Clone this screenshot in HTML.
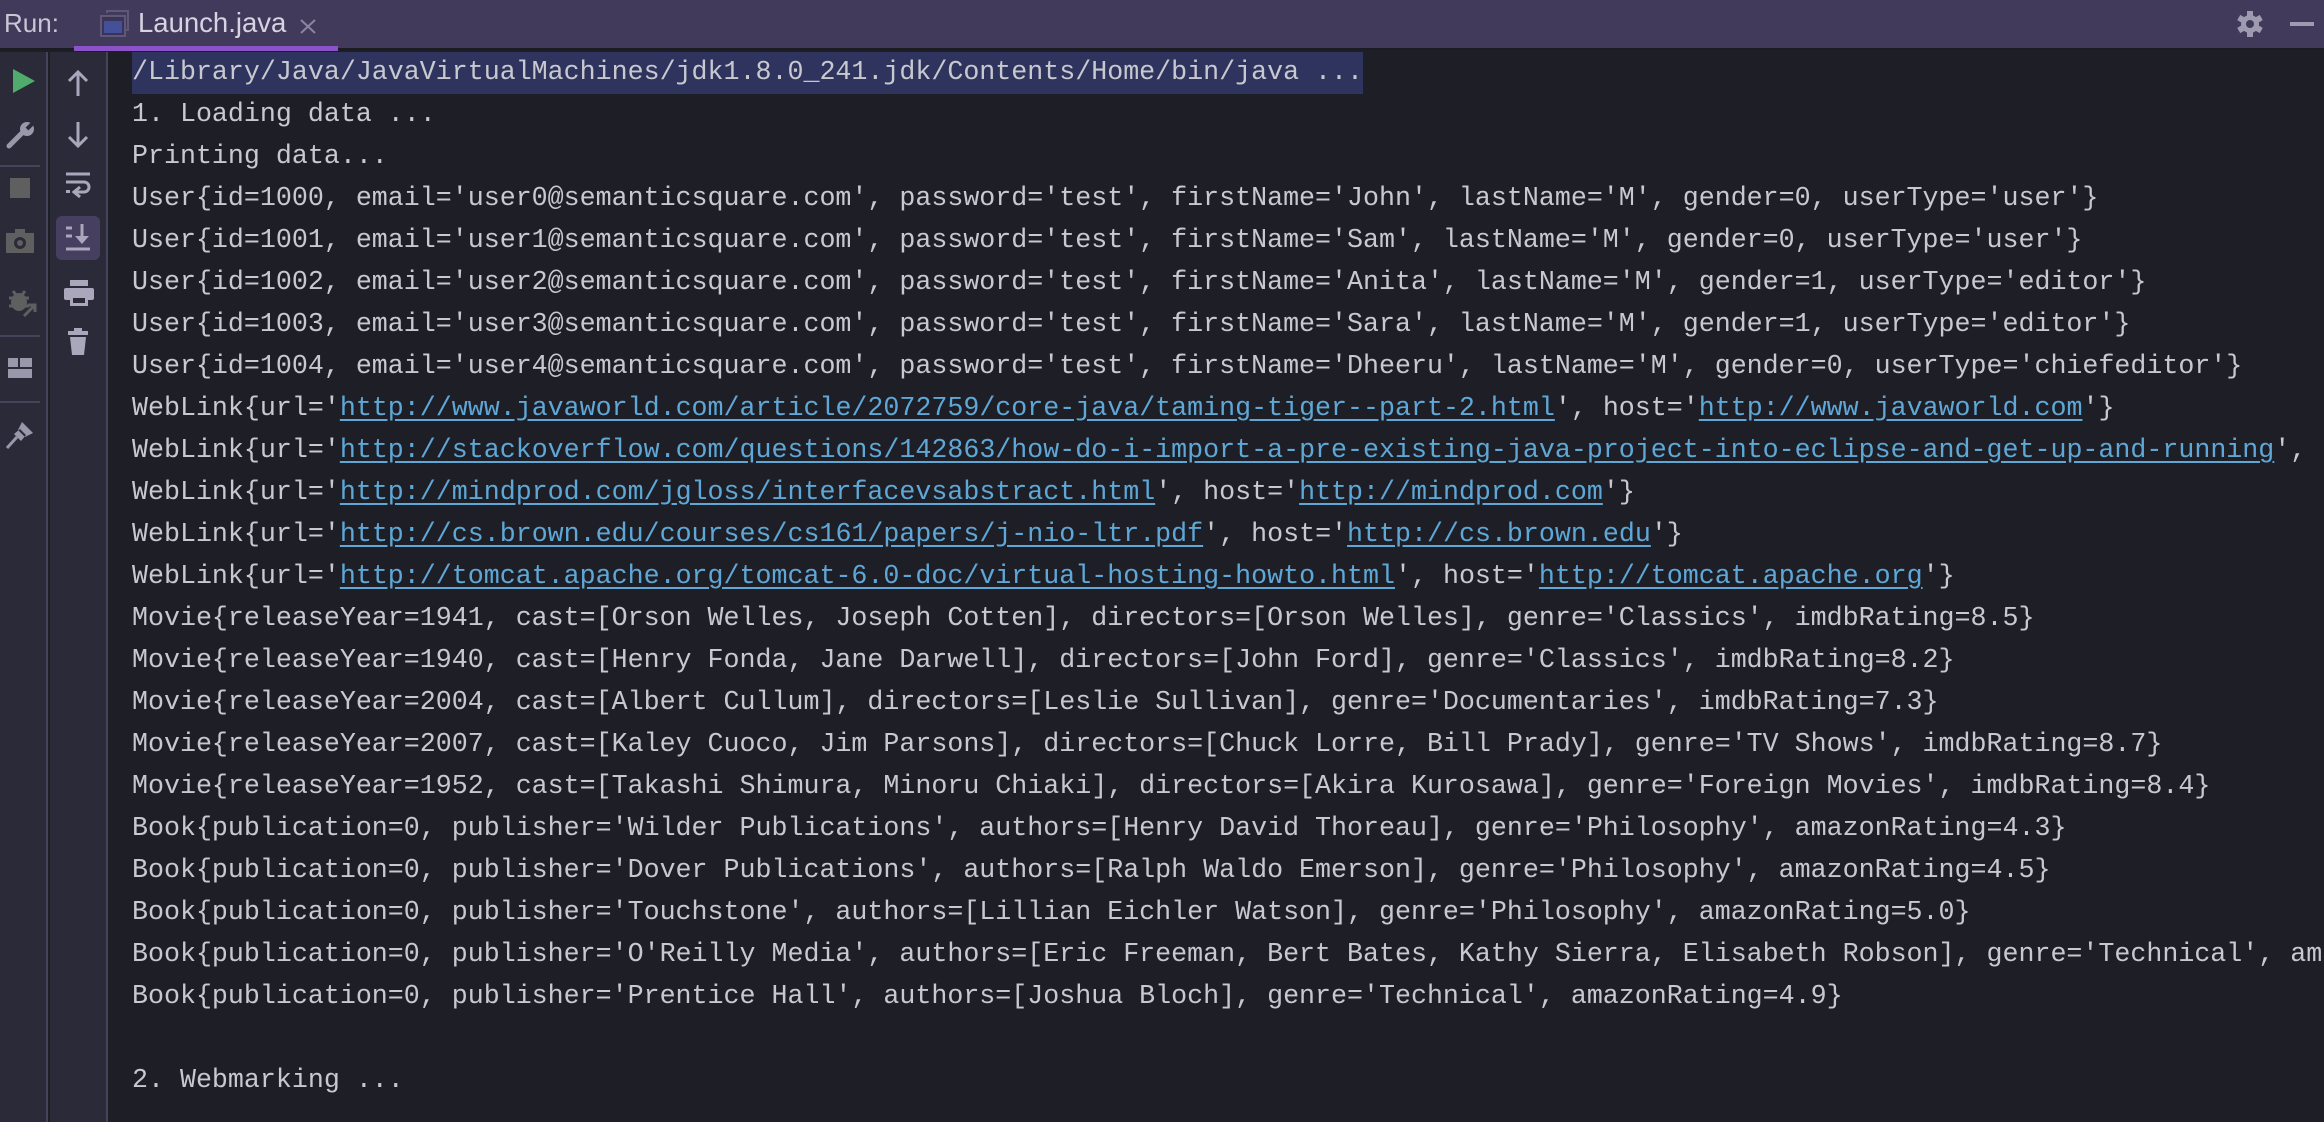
<!DOCTYPE html>
<html><head><meta charset="utf-8"><style>
html,body{margin:0;padding:0;width:2324px;height:1122px;overflow:hidden;background:#1e1f26;}
*{box-sizing:border-box}
.top{position:absolute;left:0;top:0;width:2324px;height:50px;background:#423a5a;border-bottom:2px solid #1b1b22;}
.run{position:absolute;left:4px;top:8px;font:26px "Liberation Sans",sans-serif;color:#c9c6d6;}
.tabt{position:absolute;left:138px;top:7px;font:27.5px "Liberation Sans",sans-serif;color:#d6d3e2;}
.ul{position:absolute;left:74px;top:46px;width:264px;height:5px;background:#8c52c8;}
.col1{position:absolute;left:0;top:52px;width:48px;height:1070px;background:#2b2a39;border-right:2px solid #45435a;}
.col2{position:absolute;left:50px;top:52px;width:58px;height:1070px;background:#2b2a39;border-right:2px solid #45435a;}
.sep{position:absolute;left:0;width:40px;height:2px;background:#45435a;}
.code{position:absolute;left:132px;top:52px;right:0;font:26.65px/42px "Liberation Mono",monospace;color:#c8c8cf;white-space:pre;overflow:hidden;}
.sel{background:#2f345e;margin-left:-2px;padding-left:2px;display:inline-block;height:42px;}
a{color:#5ea7d6;text-decoration:underline;text-underline-offset:4px}
svg{position:absolute}
</style></head><body>
<div class="top">
<div class="run">Run:</div>
<svg style="left:100px;top:10px" width="30" height="28" viewBox="0 0 30 28"><path d="M7 3V1H28V20H25" fill="none" stroke="#5f5878" stroke-width="2"/><rect x="1" y="6" width="24" height="20" fill="#3a3556" stroke="#5f5878" stroke-width="2"/><rect x="4" y="11" width="18" height="12" fill="#44509a"/></svg>
<div class="tabt">Launch.java</div>
<svg style="left:300px;top:19px" width="16" height="15" viewBox="0 0 16 15"><path d="M1 1L15 14M15 1L1 14" stroke="#8a86a0" stroke-width="2"/></svg>
<div class="ul"></div>
<svg style="left:2236px;top:10px" width="28" height="28" viewBox="0 0 28 28"><g fill="#9e9bb0"><circle cx="14" cy="14" r="9"/><rect x="11" y="1" width="6" height="26"/><rect x="11" y="1" width="6" height="26" transform="rotate(60 14 14)"/><rect x="11" y="1" width="6" height="26" transform="rotate(120 14 14)"/></g><circle cx="14" cy="14" r="4" fill="#423a5a"/></svg>
<div style="position:absolute;left:2290px;top:22px;width:24px;height:4px;background:#9e9bb0"></div>
</div>
<div class="col1">
<svg style="left:11px;top:16px" width="26" height="26" viewBox="0 0 26 26"><path d="M2 1L24 13L2 25Z" fill="#4fac6c"/></svg>
<svg style="left:6px;top:68px" width="30" height="30" viewBox="0 0 30 30"><path d="M3 26L17 12" stroke="#9a97aa" stroke-width="5" stroke-linecap="round"/><circle cx="21" cy="9" r="7" fill="#9a97aa"/><path d="M21 9L27 3" stroke="#2b2a39" stroke-width="4"/></svg>
<div class="sep" style="top:113px"></div>
<div style="position:absolute;left:10px;top:126px;width:20px;height:20px;background:#5f5f5f"></div>
<svg style="left:5px;top:176px" width="30" height="26" viewBox="0 0 30 26"><rect x="1" y="5" width="28" height="20" fill="#5f5f5f"/><rect x="10" y="1" width="10" height="6" fill="#5f5f5f"/><circle cx="15" cy="15" r="6" fill="#2b2a39"/><circle cx="15" cy="15" r="3" fill="#5f5f5f"/></svg>
<svg style="left:7px;top:236px" width="30" height="30" viewBox="0 0 30 30"><ellipse cx="12" cy="14" rx="8" ry="9" fill="#5f5f5f"/><path d="M2 10h20M2 18h20M6 3l3 4M18 3l-3 4" stroke="#5f5f5f" stroke-width="3"/><path d="M17 28L28 17M21 17h7v7" stroke="#5f5f5f" stroke-width="3" fill="none"/></svg>
<div class="sep" style="top:283px"></div>
<svg style="left:8px;top:306px" width="24" height="20" viewBox="0 0 24 20"><rect x="0" y="0" width="10" height="9" fill="#9a97aa"/><rect x="12" y="0" width="12" height="9" fill="#9a97aa"/><rect x="0" y="11" width="24" height="9" fill="#9a97aa"/></svg>
<div class="sep" style="top:349px"></div>
<svg style="left:5px;top:368px" width="30" height="30" viewBox="0 0 30 30"><path d="M2 28L12 17" stroke="#9a97aa" stroke-width="3"/><path d="M17 2L28 13L20 17L13 10Z M9 14L16 21L21 15L15 9Z" fill="#9a97aa"/></svg>
</div>
<div class="col2">
<svg style="left:16px;top:18px" width="24" height="26" viewBox="0 0 24 26"><path d="M12 26V3M3 11L12 2L21 11" stroke="#aaa6bb" stroke-width="3" fill="none"/></svg>
<svg style="left:16px;top:70px" width="24" height="26" viewBox="0 0 24 26"><path d="M12 0V23M3 15L12 24L21 15" stroke="#aaa6bb" stroke-width="3" fill="none"/></svg>
<div style="position:absolute;left:6px;top:164px;width:44px;height:44px;background:#463f5f;border-radius:6px"></div>
<svg style="left:16px;top:120px" width="26" height="30" viewBox="0 0 26 30"><path d="M0 2H24M0 10H18a5 5 0 0 1 0 10H10" stroke="#aaa6bb" stroke-width="3" fill="none"/><path d="M14 15L8 20L14 25" stroke="#aaa6bb" stroke-width="3" fill="none"/><rect x="0" y="18" width="4" height="3" fill="#aaa6bb"/></svg>
<svg style="left:16px;top:172px" width="26" height="28" viewBox="0 0 26 28"><path d="M0 4H6M0 12H6M0 25H24" stroke="#aaa6bb" stroke-width="3"/><path d="M16 0V15" stroke="#aaa6bb" stroke-width="3"/><path d="M9 12L16 20L23 12Z" fill="#aaa6bb"/></svg>
<svg style="left:14px;top:228px" width="30" height="28" viewBox="0 0 30 28"><rect x="6" y="0" width="18" height="6" fill="#aaa6bb"/><rect x="0" y="8" width="30" height="12" rx="2" fill="#aaa6bb"/><rect x="6" y="16" width="18" height="10" fill="#aaa6bb"/><rect x="9" y="18" width="12" height="5" fill="#2b2a39"/></svg>
<svg style="left:18px;top:276px" width="22" height="28" viewBox="0 0 22 28"><rect x="0" y="3" width="20" height="4" fill="#aaa6bb"/><rect x="6" y="0" width="8" height="3" fill="#aaa6bb"/><path d="M2 9H18L16 27H4Z" fill="#aaa6bb"/></svg>
</div>
<div class="code"><span class="sel">/Library/Java/JavaVirtualMachines/jdk1.8.0_241.jdk/Contents/Home/bin/java ...</span>
1. Loading data ...
Printing data...
User{id=1000, email='user0@semanticsquare.com', password='test', firstName='John', lastName='M', gender=0, userType='user'}
User{id=1001, email='user1@semanticsquare.com', password='test', firstName='Sam', lastName='M', gender=0, userType='user'}
User{id=1002, email='user2@semanticsquare.com', password='test', firstName='Anita', lastName='M', gender=1, userType='editor'}
User{id=1003, email='user3@semanticsquare.com', password='test', firstName='Sara', lastName='M', gender=1, userType='editor'}
User{id=1004, email='user4@semanticsquare.com', password='test', firstName='Dheeru', lastName='M', gender=0, userType='chiefeditor'}
WebLink{url='<a>http://www.javaworld.com/article/2072759/core-java/taming-tiger--part-2.html</a>', host='<a>http://www.javaworld.com</a>'}
WebLink{url='<a>http://stackoverflow.com/questions/142863/how-do-i-import-a-pre-existing-java-project-into-eclipse-and-get-up-and-running</a>', host='<a>http://stackoverflow.com</a>'}
WebLink{url='<a>http://mindprod.com/jgloss/interfacevsabstract.html</a>', host='<a>http://mindprod.com</a>'}
WebLink{url='<a>http://cs.brown.edu/courses/cs161/papers/j-nio-ltr.pdf</a>', host='<a>http://cs.brown.edu</a>'}
WebLink{url='<a>http://tomcat.apache.org/tomcat-6.0-doc/virtual-hosting-howto.html</a>', host='<a>http://tomcat.apache.org</a>'}
Movie{releaseYear=1941, cast=[Orson Welles, Joseph Cotten], directors=[Orson Welles], genre='Classics', imdbRating=8.5}
Movie{releaseYear=1940, cast=[Henry Fonda, Jane Darwell], directors=[John Ford], genre='Classics', imdbRating=8.2}
Movie{releaseYear=2004, cast=[Albert Cullum], directors=[Leslie Sullivan], genre='Documentaries', imdbRating=7.3}
Movie{releaseYear=2007, cast=[Kaley Cuoco, Jim Parsons], directors=[Chuck Lorre, Bill Prady], genre='TV Shows', imdbRating=8.7}
Movie{releaseYear=1952, cast=[Takashi Shimura, Minoru Chiaki], directors=[Akira Kurosawa], genre='Foreign Movies', imdbRating=8.4}
Book{publication=0, publisher='Wilder Publications', authors=[Henry David Thoreau], genre='Philosophy', amazonRating=4.3}
Book{publication=0, publisher='Dover Publications', authors=[Ralph Waldo Emerson], genre='Philosophy', amazonRating=4.5}
Book{publication=0, publisher='Touchstone', authors=[Lillian Eichler Watson], genre='Philosophy', amazonRating=5.0}
Book{publication=0, publisher='O'Reilly Media', authors=[Eric Freeman, Bert Bates, Kathy Sierra, Elisabeth Robson], genre='Technical', amazonRating=4.5}
Book{publication=0, publisher='Prentice Hall', authors=[Joshua Bloch], genre='Technical', amazonRating=4.9}

2. Webmarking ...</div>
</body></html>
